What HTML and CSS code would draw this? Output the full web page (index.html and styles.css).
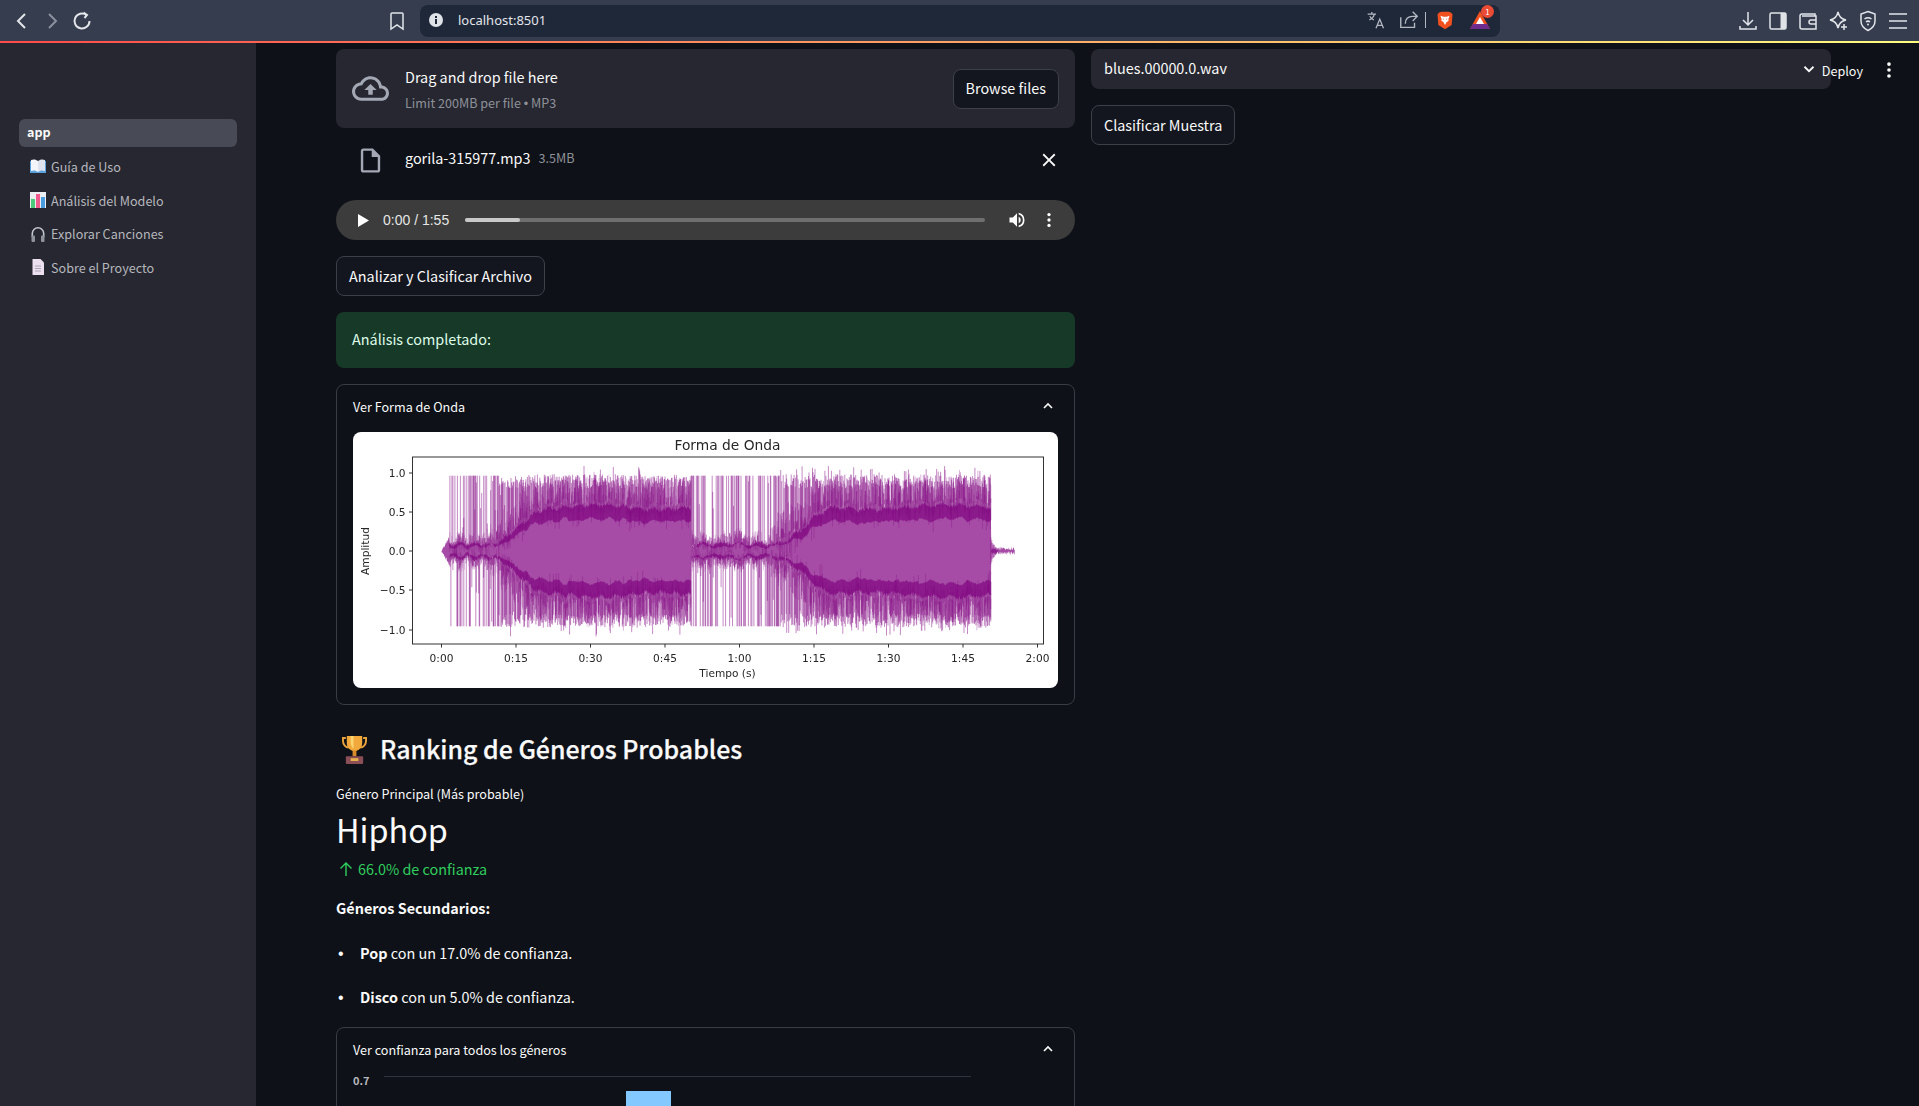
FILE: index.html
```html
<!DOCTYPE html>
<html lang="es">
<head>
    <meta charset="UTF-8">
    <meta name="viewport" content="width=device-width, initial-scale=1.0">
    <title>app</title>
    <link rel="stylesheet" href="styles.css">
</head>
<body>
    <!-- Browser chrome -->
    <header class="browser-bar">
        <div class="nav-buttons">
            <span class="tool-icon"><svg viewBox="0 0 24 24" width="24" height="24"><path d="M15 5l-7 7 7 7" class="stroke-icon"/></svg></span>
            <span class="tool-icon"><svg viewBox="0 0 24 24" width="24" height="24"><path d="M9 5l7 7-7 7" class="stroke-icon dim"/></svg></span>
            <span class="tool-icon"><svg viewBox="0 0 24 24" width="24" height="24"><path d="M19.500 12a7.500 7.500 0 1 1-3-6M13.500 3.500l3.500 2.500-2.500 3" class="stroke-icon"/></svg></span>
        </div>
        <span class="tool-icon bookmark"><svg viewBox="0 0 24 24" width="24" height="24"><path d="M7 4h10a1 1 0 0 1 1 1v15l-6-4-6 4V5a1 1 0 0 1 1-1z" class="stroke-icon thin"/></svg></span>
        <div class="url-bar">
            <svg class="info-icon" viewBox="0 0 16 16" width="16" height="16"><circle cx="8" cy="8" r="7" fill="#dfe2e7"/><rect x="7" y="7" width="2" height="5" fill="#1f2839"/><rect x="7" y="4" width="2" height="2" fill="#1f2839"/></svg>
            <span class="url-text">localhost:8501</span>
            <div class="url-actions">
                <svg viewBox="0 0 24 24" width="20" height="20"><path d="M2 5h10M7 2.500V5M10 5c-.5 3-3 5.500-6 7M4.500 7.500c1 2 3 3.500 5 4.500M12 22l4.500-11L21 22M13.500 18.500h6" class="stroke-icon thin grey"/></svg>
                <svg class="share-icon" viewBox="0 0 24 24" width="22" height="22"><path d="M3 9v11h15v-5M8 16c0-5 3-8 8-8h4M16 3l5 5-5 5" class="stroke-icon thin grey"/></svg>
                <span class="url-divider"></span>
                <svg class="brave-icon" viewBox="0 0 24 24" width="20" height="24"><path d="M5 3l3-1h8l3 1 2 2-1 13-8 5-8-5L3 5z" fill="#f1501f"/><path d="M6.500 7l3.500 1h4l3.500-1-1.500 4 .5 1.500-3 2.500-1 2.500h-1l-1-2.500-3-2.500.5-1.500z" fill="#fff"/><path d="M9 10.500h2l-1 1.200zM13 10.500h2l-1 1.200z" fill="#f1501f"/></svg>
                <span class="bat-wrap">
                    <svg viewBox="0 0 20 18" width="20" height="18"><path d="M10 0l10 18H0z" fill="#f1501f"/><path d="M0 18l3-5h14l3 5z" fill="#6f2b8e"/><path d="M10 6l4 7H6z" fill="#fff"/></svg>
                    <span class="bat-badge">1</span>
                </span>
            </div>
        </div>
        <div class="browser-actions">
            <span class="tool-icon"><svg viewBox="0 0 24 24" width="24" height="24"><path d="M12 3v13M7 11l5 5 5-5M4 17v3h16v-3" class="stroke-icon thin"/></svg></span>
            <span class="tool-icon"><svg viewBox="0 0 24 24" width="24" height="24"><rect x="4" y="4" width="16" height="16" rx="1.500" class="stroke-icon thin"/><rect x="14.500" y="4" width="5.500" height="16" fill="#dfe2e7"/></svg></span>
            <span class="tool-icon"><svg viewBox="0 0 24 24" width="24" height="24"><path d="M19 7V5H6a2 2 0 0 0-2 2v11a2 2 0 0 0 2 2h14V7H6M20 11h-5a2 2 0 0 0 0 4h5" class="stroke-icon thin"/></svg></span>
            <span class="tool-icon"><svg viewBox="0 0 24 24" width="24" height="24"><path d="M12 3c1 5 3 7 8 8-5 1-7 3-8 8-1-5-3-7-8-8 5-1 7-3 8-8zM18 15v6M15 18h6" class="stroke-icon thin"/></svg></span>
            <span class="tool-icon"><svg viewBox="0 0 24 24" width="24" height="24"><path d="M12 2.500l7 2.500v7c0 4.500-3 7.500-7 9.500-4-2-7-5-7-9.500V5zM8.500 10c2-1.500 5-1.500 7 0M10 12.800c1.200-.8 2.800-.8 4 0" class="stroke-icon thin"/><circle cx="12" cy="15.500" r="1" fill="#dfe2e7"/></svg></span>
            <span class="tool-icon"><svg viewBox="0 0 24 24" width="24" height="24"><path d="M3 5h18M3 12h18M3 19h18" class="stroke-icon thin"/></svg></span>
        </div>
    </header>
    <div class="decoration"></div>

    <div class="shell">
        <!-- Sidebar navigation -->
        <nav class="sidebar">
            <a class="nav-item active">app</a>
            <a class="nav-item">
                <svg viewBox="0 0 16 16" width="16" height="16"><path d="M0 3h16v12H0z" fill="#5aa0dc"/><path d="M1 2c3-1 5-.5 7 1v11c-2-1.500-4-2-7-1z" fill="#f4f5f8"/><path d="M15 2c-3-1-5-.5-7 1v11c2-1.500 4-2 7-1z" fill="#dfe3ee"/></svg>
                Guía de Uso
            </a>
            <a class="nav-item">
                <svg viewBox="0 0 16 16" width="16" height="16"><rect width="16" height="16" fill="#eceef2"/><rect x="1" y="7" width="4" height="9" fill="#4cc97a"/><rect x="6" y="2" width="4" height="14" fill="#f05a8c"/><rect x="11" y="5" width="4" height="11" fill="#4a9ce0"/></svg>
                Análisis del Modelo
            </a>
            <a class="nav-item">
                <svg viewBox="0 0 16 16" width="16" height="16"><path d="M2.300 11V7.500a5.700 5.700 0 0 1 11.400 0V11" fill="none" stroke="#c3c6cd" stroke-width="1.600"/><rect x="1.500" y="9.500" width="3.500" height="6.500" rx="1" fill="#8f939d"/><rect x="11" y="9.500" width="3.500" height="6.500" rx="1" fill="#8f939d"/></svg>
                Explorar Canciones
            </a>
            <a class="nav-item">
                <svg viewBox="0 0 16 16" width="16" height="16"><path d="M2.500 0h8l3.500 3.500V16H2.500z" fill="#ecdff0"/><path d="M5 7h6M5 9.500h6M5 12h6" stroke="#a9a4b4" stroke-width="1"/></svg>
                Sobre el Proyecto
            </a>
        </nav>

        <main class="main">
            <div class="top-actions">
                <span class="deploy">Deploy</span>
                <svg viewBox="0 0 24 24" width="22" height="22"><circle cx="12" cy="5.500" r="2" fill="#fafafa"/><circle cx="12" cy="12" r="2" fill="#fafafa"/><circle cx="12" cy="18.500" r="2" fill="#fafafa"/></svg>
            </div>

            <section class="col-left">
                <div class="uploader">
                    <svg class="cloud-icon" viewBox="0 0 24 24" width="37" height="37"><path d="M19.350 10.040C18.670 6.590 15.640 4 12 4 9.110 4 6.600 5.640 5.350 8.040 2.340 8.360 0 10.910 0 14c0 3.310 2.690 6 6 6h13c2.760 0 5-2.240 5-5 0-2.640-2.050-4.780-4.650-4.960zM19 18H6c-2.210 0-4-1.790-4-4 0-2.050 1.530-3.760 3.560-3.970l1.070-.11.5-.95C8.080 7.140 9.940 6 12 6c2.620 0 4.880 1.860 5.390 4.430l.3 1.500 1.530.11c1.560.1 2.780 1.410 2.780 2.960 0 1.650-1.350 3-3 3zM8 13h2.550v3h2.900v-3H16l-4-4z"/></svg>
                    <div class="uploader-text">
                        <div class="uploader-title">Drag and drop file here</div>
                        <div class="uploader-limit">Limit 200MB per file <span class="dot">•</span> MP3</div>
                    </div>
                    <button class="btn browse">Browse files</button>
                </div>

                <div class="file-row">
                    <svg class="file-icon" viewBox="0 0 24 24" width="29" height="29"><path d="M14 2H6c-1.100 0-1.990.9-1.990 2L4 20c0 1.100.89 2 1.990 2H18c1.100 0 2-.9 2-2V8l-6-6zM6 20V4h7v5h5v11H6z"/></svg>
                    <span class="file-name">gorila-315977.mp3</span>
                    <span class="file-size">3.5MB</span>
                    <svg class="close-icon" viewBox="0 0 24 24" width="22" height="22"><path d="M19 6.410L17.590 5 12 10.590 6.410 5 5 6.410 10.590 12 5 17.590 6.410 19 12 13.410 17.590 19 19 17.590 13.410 12z"/></svg>
                </div>

                <div class="audio-player">
                    <svg class="play-icon" viewBox="0 0 12 14" width="11" height="13"><path d="M0 0l12 7-12 7z"/></svg>
                    <span class="audio-time">0:00 / 1:55</span>
                    <div class="audio-track"><div class="audio-played"></div></div>
                    <svg class="volume-icon" viewBox="0 0 24 24" width="20" height="20"><path d="M3 9v6h4l5 5V4L7 9H3zm13.500 3A4.500 4.500 0 0 0 14 7.970v8.050A4.470 4.470 0 0 0 16.500 12zM14 3.230v2.060a7 7 0 0 1 0 13.420v2.060a9 9 0 0 0 0-17.540z"/></svg>
                    <svg class="audio-menu" viewBox="0 0 24 24" width="20" height="20"><circle cx="12" cy="5.500" r="2"/><circle cx="12" cy="12" r="2"/><circle cx="12" cy="18.500" r="2"/></svg>
                </div>

                <button class="btn analyze">Analizar y Clasificar Archivo</button>

                <div class="alert-success">Análisis completado:</div>

                <div class="expander wave-expander">
                    <div class="expander-head">
                        <span>Ver Forma de Onda</span>
                        <svg viewBox="0 0 24 24" width="16" height="16"><path d="M6 15l6-6 6 6" class="chevron"/></svg>
                    </div>
                    <div class="plot-card">
                        <svg id="wavePlot" viewBox="0 0 704 256" width="704" height="256">
                            <text x="374" y="18" text-anchor="middle" class="plot-title">Forma de Onda</text>
                            <g id="waveData"></g>
                            <rect x="59" y="25" width="631" height="187" fill="none" stroke="#333" stroke-width="1"/>
                            <path id="tickMarks" d="" stroke="#333" stroke-width="1" fill="none"/>
                            <g class="plot-y" text-anchor="end">
                                <text x="52" y="45">1.0</text>
                                <text x="52" y="84">0.5</text>
                                <text x="52" y="123">0.0</text>
                                <text x="52" y="162">−0.5</text>
                                <text x="52" y="202">−1.0</text>
                            </g>
                            <g class="plot-x" text-anchor="middle">
                                <text x="88" y="230">0:00</text>
                                <text x="162.500" y="230">0:15</text>
                                <text x="237" y="230">0:30</text>
                                <text x="311.500" y="230">0:45</text>
                                <text x="386" y="230">1:00</text>
                                <text x="460.500" y="230">1:15</text>
                                <text x="535" y="230">1:30</text>
                                <text x="609.500" y="230">1:45</text>
                                <text x="684" y="230">2:00</text>
                            </g>
                            <text x="374" y="245" text-anchor="middle" class="plot-label">Tiempo (s)</text>
                            <text x="0" y="0" text-anchor="middle" class="plot-label" transform="translate(15 119) rotate(-90)">Amplitud</text>
                        </svg>
                    </div>
                </div>

                <h2 class="ranking-title">
                    <svg viewBox="0 0 26 30" width="25" height="29"><path d="M4 3H1v3c0 4 3 7 6 7M22 3h3v3c0 4-3 7-6 7" fill="none" stroke="#e8a33a" stroke-width="2"/><path d="M5 1h16v7c0 5-3 8-8 9-5-1-8-4-8-9z" fill="#f2a93b"/><path d="M9 1h3v13c-2-1-3-4-3-7z" fill="#fbd36f"/><rect x="11" y="16" width="4" height="6" fill="#d98b2b"/><rect x="4" y="22" width="18" height="8" rx="1" fill="#8a4f56"/><rect x="9" y="24" width="8" height="3" fill="#e8b04a"/></svg>
                    <span class="ranking-text">Ranking de Géneros Probables</span>
                </h2>

                <div class="metric-label">Género Principal (Más probable)</div>
                <div class="metric-value">Hiphop</div>
                <div class="metric-delta">
                    <svg viewBox="0 0 16 16" width="16" height="16"><path d="M8 15V2M2.500 7.500L8 2l5.500 5.500" fill="none" stroke="currentColor" stroke-width="1.400"/></svg>
                    66.0% de confianza
                </div>

                <p class="secondary-title">Géneros Secundarios:</p>
                <ul class="secondary-list">
                    <li><strong>Pop</strong> con un 17.0% de confianza.</li>
                    <li><strong>Disco</strong> con un 5.0% de confianza.</li>
                </ul>

                <div class="expander chart-expander">
                    <div class="expander-head">
                        <span>Ver confianza para todos los géneros</span>
                        <svg viewBox="0 0 24 24" width="16" height="16"><path d="M6 15l6-6 6 6" class="chevron"/></svg>
                    </div>
                    <svg class="bar-chart" viewBox="0 0 705 66" width="705" height="66">
                        <text x="0" y="17" class="bar-tick">0.7</text>
                        <line x1="31" y1="8.500" x2="618" y2="8.500" stroke="#31333f"/>
                        <rect x="273" y="23" width="45" height="43" fill="#83c9ff"/>
                    </svg>
                </div>
            </section>

            <section class="col-right">
                <div class="select-box">
                    <span class="select-value">blues.00000.0.wav</span>
                    <svg viewBox="0 0 24 24" width="18" height="18"><path d="M6 9l6 6 6-6" class="chevron"/></svg>
                </div>
                <button class="btn classify">Clasificar Muestra</button>
            </section>
        </main>
    </div>

    <script src="script.js"></script>
</body>
</html>
```

FILE: styles.css
```css
* {
    box-sizing: border-box;
}
html, body {
    height: 100%;
}
body {
    margin: 0;
    overflow: hidden;
    display: flex;
    flex-direction: column;
    font-family: "Noto Sans CJK SC", "Noto Sans", sans-serif;
    font-size: 14.400px;
    background: #0e1117;
    color: #fafafa;
}

/* browser chrome */
.browser-bar {
    height: 41px;
    flex: none;
    display: flex;
    align-items: center;
    background: #353d4e;
}
.nav-buttons {
    width: 382px;
    padding-left: 7px;
    display: flex;
}
.tool-icon {
    width: 30px;
    height: 30px;
    display: flex;
    align-items: center;
    justify-content: center;
}
.stroke-icon {
    fill: none;
    stroke: #e2e5ea;
    stroke-width: 2;
}
.stroke-icon.thin {
    stroke-width: 1.500;
}
.stroke-icon.dim {
    stroke: #8b919e;
}
.stroke-icon.grey {
    stroke: #b3b8c2;
}
.bookmark {
    margin-right: 8px;
}
.url-bar {
    width: 1080px;
    height: 32px;
    padding-left: 8px;
    padding-bottom: 1px;
    display: flex;
    align-items: center;
    background: #1f2839;
    border-radius: 8px;
}
.url-text {
    margin-left: 14px;
    font-family: "Noto Sans", sans-serif;
    font-size: 13px;
    color: #e2e5ea;
}
.url-actions {
    margin-left: auto;
    padding-right: 10px;
    display: flex;
    align-items: center;
}
.share-icon {
    margin-left: 12px;
}
.url-divider {
    width: 1px;
    height: 16px;
    margin: 0 9px 0 5px;
    background: #b3b8c2;
}
.bat-wrap {
    position: relative;
    margin-left: 15px;
    display: flex;
}
.bat-badge {
    position: absolute;
    top: -6px;
    right: -4px;
    width: 13px;
    height: 13px;
    border-radius: 50%;
    background: #ea4b35;
    color: #fff;
    font-size: 8px;
    line-height: 13px;
    text-align: center;
}
.browser-actions {
    margin-left: auto;
    padding-right: 6px;
    display: flex;
}
.decoration {
    height: 2px;
    flex: none;
    background: linear-gradient(90deg, #ff4b4b, #fffd80);
}

/* page layout */
.shell {
    flex: 1;
    min-height: 0;
    display: flex;
}
.sidebar {
    width: 256px;
    flex: none;
    padding: 76px 19px 0;
    background: #262730;
}
.nav-item {
    height: 33.700px;
    padding-left: 11px;
    padding-bottom: 1px;
    display: flex;
    align-items: center;
    gap: 5px;
    font-size: 12.600px;
    color: #b6b7bd;
}
.nav-item.active {
    height: 28px;
    margin-bottom: 3px;
    padding-left: 8px;
    padding-bottom: 3px;
    background: #484a55;
    border-radius: 6px;
    font-weight: 700;
    color: #fafafa;
}
.main {
    position: relative;
    flex: 1;
    min-width: 0;
    padding: 6px 0 0 80px;
    display: flex;
    gap: 16px;
}
.top-actions {
    position: absolute;
    top: 16px;
    right: 19px;
    display: flex;
    align-items: center;
    gap: 15px;
    font-size: 12.600px;
    z-index: 2;
}
.col-left {
    width: 739px;
    flex: none;
}
.col-right {
    width: 740px;
    flex: none;
}

/* buttons */
.btn {
    height: 40px;
    padding: 0 12px 2px;
    background: #13161f;
    border: 1px solid #3d3f49;
    border-radius: 8px;
    color: #fafafa;
    font-family: inherit;
    font-size: 14.400px;
}
.analyze {
    display: block;
    margin-top: 16px;
}

/* file uploader */
.uploader {
    height: 79px;
    padding: 0 16px;
    display: flex;
    align-items: center;
    background: #262730;
    border-radius: 8px;
}
.cloud-icon {
    fill: #a3a8b4;
    flex: none;
}
.uploader-text {
    margin-left: 16px;
    padding-top: 1px;
}
.uploader-title {
    line-height: 24px;
}
.uploader-limit {
    margin-top: 4px;
    font-size: 12.600px;
    line-height: 20px;
    color: #8e9199;
}
.dot {
    font-family: "Liberation Sans", sans-serif;
}
.browse {
    margin-left: auto;
}

.file-row {
    height: 40px;
    margin: 12px 0 20px;
    padding: 0 15px 0 20px;
    display: flex;
    align-items: center;
}
.file-icon {
    fill: #a3a8b4;
    flex: none;
}
.file-name {
    margin-left: 20px;
    margin-bottom: 6px;
}
.file-size {
    margin-left: 8px;
    margin-bottom: 6px;
    font-size: 12.600px;
    color: #8e9199;
}
.close-icon {
    margin-left: auto;
    fill: #fafafa;
}

/* audio player */
.audio-player {
    height: 40px;
    padding: 0 16px 0 22px;
    display: flex;
    align-items: center;
    background: #3b3c3b;
    border-radius: 20px;
}
.play-icon {
    fill: #fff;
    flex: none;
}
.audio-time {
    margin-left: 14px;
    font-family: "Liberation Sans", sans-serif;
    font-size: 14px;
    color: #e6e6e6;
}
.audio-track {
    width: 520px;
    height: 4px;
    margin-left: 16px;
    background: #6e6f6e;
    border-radius: 2px;
}
.audio-played {
    width: 55px;
    height: 100%;
    background: #c9c9c9;
    border-radius: 2px;
}
.volume-icon {
    margin-left: 22px;
    fill: #fff;
}
.audio-menu {
    margin-left: 12px;
    fill: #fff;
}

.alert-success {
    height: 56px;
    margin-top: 16px;
    padding: 0 16px 3px;
    display: flex;
    align-items: center;
    background: #173928;
    border-radius: 8px;
    color: #dffde9;
}

/* expanders */
.expander {
    border: 1px solid #3a3c45;
    border-radius: 8px;
    font-size: 12.600px;
}
.expander-head {
    height: 42px;
    padding: 0 18px 0 16px;
    display: flex;
    align-items: center;
    justify-content: space-between;
}
.chevron {
    fill: none;
    stroke: #fafafa;
    stroke-width: 2.400;
}
.wave-expander {
    height: 321px;
    margin-top: 16px;
}
.plot-card {
    margin: 5px 16px 0;
    background: #fff;
    border-radius: 8px;
    overflow: hidden;
}
#wavePlot {
    display: block;
    width: 100%;
    filter: blur(0.3px);
}
.plot-title {
    font-family: "DejaVu Sans", sans-serif;
    font-size: 13.800px;
    fill: #262626;
}
.plot-x text, .plot-y text, .plot-label {
    font-family: "DejaVu Sans", sans-serif;
    font-size: 10.600px;
    fill: #262626;
}

/* ranking */
.ranking-title {
    height: 34px;
    margin: 27px 0 0;
    padding-left: 6px;
    display: flex;
    align-items: center;
    gap: 13px;
    font-size: 24.900px;
    font-weight: 500;
    -webkit-text-stroke: 0.250px #fafafa;
}
.ranking-text {
    margin-bottom: 3px;
}
.metric-label {
    margin-top: 18px;
    font-size: 12.600px;
    line-height: 20px;
}
.metric-value {
    margin-top: 2px;
    font-size: 32.400px;
    line-height: 46px;
}
.metric-delta {
    margin-top: 5px;
    padding-left: 2px;
    display: flex;
    align-items: center;
    gap: 4px;
    line-height: 24px;
    color: #2fce5e;
}
.secondary-title {
    margin: 15px 0 0;
    line-height: 24px;
    font-weight: 700;
}
.secondary-list {
    margin: 21px 0 0;
    padding: 0 0 0 2px;
    list-style: none;
}
.secondary-list li {
    line-height: 24px;
}
.secondary-list li + li {
    margin-top: 20px;
}
.secondary-list li::before {
    content: "•";
    display: inline-block;
    width: 22px;
    font-family: "Liberation Sans", sans-serif;
    font-size: 16px;
    line-height: 1;
}
.chart-expander {
    margin-top: 18px;
    height: 200px;
}
.bar-chart {
    display: block;
    margin: -2px 16px 0;
}
.bar-tick {
    font-size: 11px;
    font-weight: 700;
    fill: #b6b7bd;
}

/* right column */
.select-box {
    height: 40px;
    padding: 0 13px;
    display: flex;
    align-items: center;
    justify-content: space-between;
    background: #262730;
    border-radius: 8px;
}
.select-value {
    margin-bottom: 3px;
}
.classify {
    margin-top: 16px;
}
```

FILE: script.js
```js
// Draws the waveform into the plot. Seeded so the picture is the same every run.
let seed = 20240;
function rnd() {
    seed = (seed * 1664525 + 1013904223) % 4294967296;
    return seed / 4294967296;
}

const X0 = 88, PX_PER_SEC = 74.5 / 15, Y0 = 119, PX_PER_UNIT = 78.4;
const sx = t => (X0 + t * PX_PER_SEC).toFixed(1);
const sy = a => (Y0 - a * PX_PER_UNIT).toFixed(1);

function smooth(a, b, t) {
    const k = Math.min(1, Math.max(0, (t - a) / (b - a)));
    return k * k * (3 - 2 * k);
}

// solid middle of the signal, before noise
function core(t) {
    if (t < 1.6) return 0.18 * t / 1.6;
    if (t > 110.6) return 0.03;
    if (t < 50.3) return 0.09 + 0.02 * Math.sin(t * 2.1) + 0.47 * smooth(10, 21, t) + 0.03 * Math.sin(t / 4) * smooth(14, 16, t);
    return 0.09 + 0.02 * Math.sin(t * 1.7) + 0.47 * smooth(67, 80, t) + 0.03 * Math.sin(t / 5) * smooth(73, 76, t);
}
function density(t) {
    // how full the band above the core is: 0 = single spikes, 1 = solid
    if (t < 50.3) return smooth(7, 15, t);
    return smooth(62, 73, t);
}

const corePts = [];
const coreLow = [];
let spikes = '', band = '', inner = '';

for (let t = 0; t <= 115.4; t += 0.1) {
    const c = core(t);
    const up = c + (rnd() - 0.5) * 0.05;
    const down = c + (rnd() - 0.5) * 0.05;
    corePts.push(sx(t) + ' ' + sy(up));
    coreLow.unshift(sx(t) + ' ' + sy(-down));
}

// slow wobble, so the dark band is not a clean ribbon
let wobble = 0;
for (let t = 1.6; t < 110.6; t += 0.1) {
    wobble = wobble * 0.9 + (rnd() - 0.5) * 0.05;
    const c = core(t) + wobble * 0.6;
    const d = density(t);
    for (const dir of [1, -1]) {
        let top;
        if (rnd() < 0.35 + d * 0.55) {
            top = d > 0.6 ? 0.8 + rnd() * 0.18 : 0.96;
            if (rnd() < 0.2) top = c + rnd() * (0.95 - c);
            if (d > 0.6 && rnd() < 0.05) top = 1 + rnd() * 0.09;
        } else {
            top = c + rnd() * 0.12;
        }
        spikes += `M${sx(t)} ${sy(dir * c * 0.7)}V${sy(dir * top)}`;

        // darker band just above the core
        if (rnd() < 0.6) {
            const reach = 0.04 + rnd() * (0.12 + 0.22 * d);
            const low = c - rnd() * 0.12;
            band += `M${sx(t)} ${sy(dir * low)}V${sy(dir * (c + reach))}`;
        }

        if (d > 0.5) {
            if (rnd() < 0.4) {
                inner += `M${sx(t)} ${sy(dir * (c + 0.05))}V${sy(dir * (c + 0.1 + rnd() * 0.32))}`;
            }
            if (rnd() < 0.14) {
                inner += `M${sx(t)} ${sy(dir * (c - 0.3 * rnd()))}V${sy(dir * c)}`;
            }
        }
    }
}
// short tail after the song ends
let tail = '';
for (let t = 110.6; t < 112; t += 0.1) {
    const a = 0.18 * (112 - t) / 1.4 * (0.5 + rnd() * 0.5);
    tail += `M${sx(t)} ${sy(a)}V${sy(-a)}`;
}

function addPath(attrs) {
    const el = document.createElementNS('http://www.w3.org/2000/svg', 'path');
    for (const k in attrs) el.setAttribute(k, attrs[k]);
    document.getElementById('waveData').appendChild(el);
}
addPath({ d: 'M' + corePts.concat(coreLow).join('L') + 'Z', fill: '#800080', 'fill-opacity': 0.7 });
addPath({ d: spikes, stroke: '#800080', 'stroke-opacity': 0.66, 'stroke-width': 0.7, fill: 'none' });
addPath({ d: inner, stroke: '#800080', 'stroke-opacity': 0.5, 'stroke-width': 0.6, fill: 'none' });
addPath({ d: band, stroke: '#800080', 'stroke-opacity': 0.36, 'stroke-width': 0.6, fill: 'none' });
addPath({ d: tail, stroke: '#800080', 'stroke-opacity': 0.7, 'stroke-width': 0.6, fill: 'none' });

// tick marks
let ticks = '';
for (let i = 0; i < 9; i++) {
    const x = X0 + i * 74.5;
    ticks += `M${x} 212v3.500`;
}
for (const y of [41, 80, 119, 158, 198]) {
    ticks += `M59 ${y}h-3.500`;
}
document.getElementById('tickMarks').setAttribute('d', ticks);
```
